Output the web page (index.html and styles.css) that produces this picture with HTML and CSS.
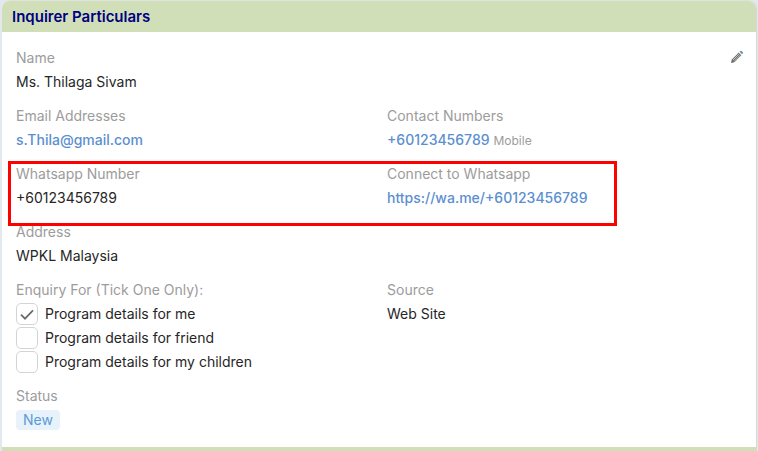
FILE: index.html
```html
<!DOCTYPE html>
<html lang="en">
<head>
    <meta charset="UTF-8">
    <meta name="viewport" content="width=device-width, initial-scale=1.0">
    <title>Inquirer Particulars</title>
    <link rel="stylesheet" href="styles.css">
</head>
<body>
    <div class="card">
        <div class="card-header">Inquirer Particulars</div>
        <div class="card-body">
            <svg class="edit-icon" width="14" height="14" viewBox="0 0 14 14">
                <path d="M1 13l.8-3.4 7-7 2.6 2.6-7 7z" fill="#6f6f68"/>
                <path d="M3 10l6.4-6.4M4.2 11.2l6.2-6.2" stroke="#fff" stroke-width=".6"/>
                <path d="M9.6 1.8l.9-.9c.3-.3.7-.3 1 0l1.4 1.4c.3.3.3.7 0 1l-.9.9z" fill="#5f8fb8"/>
            </svg>
            <div class="row">
                <div class="field">
                    <div class="label">Name</div>
                    <div class="value">Ms. Thilaga Sivam</div>
                </div>
            </div>
            <div class="row">
                <div class="field">
                    <div class="label">Email Addresses</div>
                    <div class="value"><a href="#">s.Thila@gmail.com</a></div>
                </div>
                <div class="field">
                    <div class="label">Contact Numbers</div>
                    <div class="value"><a href="#">+60123456789</a> <span class="note">Mobile</span></div>
                </div>
            </div>
            <div class="row">
                <div class="field">
                    <div class="label">Whatsapp Number</div>
                    <div class="value">+60123456789</div>
                </div>
                <div class="field">
                    <div class="label">Connect to Whatsapp</div>
                    <div class="value"><a href="#">https://wa.me/+60123456789</a></div>
                </div>
            </div>
            <div class="row">
                <div class="field">
                    <div class="label">Address</div>
                    <div class="value">WPKL Malaysia</div>
                </div>
            </div>
            <div class="row">
                <div class="field">
                    <div class="label">Enquiry For (Tick One Only):</div>
                    <div class="check-row">
                        <span class="check">
                            <svg width="14" height="11" viewBox="0 0 14 11"><path d="M1 5.6l4 4L13 1.4" fill="none" stroke="#6b6b6b" stroke-width="1.8"/></svg>
                        </span>
                        Program details for me
                    </div>
                    <div class="check-row"><span class="check"></span>Program details for friend</div>
                    <div class="check-row"><span class="check"></span>Program details for my children</div>
                </div>
                <div class="field">
                    <div class="label">Source</div>
                    <div class="value">Web Site</div>
                </div>
            </div>
            <div class="row">
                <div class="field">
                    <div class="label">Status</div>
                    <div class="value"><span class="badge">New</span></div>
                </div>
            </div>
        </div>
        <div class="card-footer"></div>
    </div>
    <div class="highlight"></div>
</body>
</html>
```

FILE: styles.css
```css
html, body {
    height: 100%;
}
body {
    margin: 0;
    font-family: Inter, "Liberation Sans", sans-serif;
    font-size: 14px;
    line-height: 24px;
    color: #262626;
    background: #e3e8ee;
    overflow: hidden;
}
.card {
    display: flex;
    flex-direction: column;
    height: 450px;
    margin: 1px 2px 0;
    background: #fff;
    border-radius: 8px 8px 0 0;
    box-shadow: 1px 0 0 #d5d8d5, 0 -1px 0 #dfe2df;
}
.card-header {
    height: 31px;
    padding-left: 10px;
    line-height: 31px;
    font-size: 15px;
    font-weight: 600;
    color: #000080;
    background: #d0dfb8;
    border-radius: 8px 8px 0 0;
}
.card-body {
    position: relative;
    flex: 1;
    padding: 14px 14px 0;
}
.card-footer {
    height: 4px;
    background: #d0dfb8;
}
.edit-icon {
    position: absolute;
    top: 18px;
    right: 12px;
}
.row {
    display: flex;
    margin-bottom: 10px;
}
.field {
    flex: none;
    width: 371px;
}
.label {
    color: #9c9c9c;
}
.value a {
    color: #5b8fd0;
    font-weight: 500;
    text-decoration: none;
}
.note {
    font-size: 12px;
    line-height: 1;
    color: #9c9c9c;
}
.check-row {
    display: flex;
    align-items: center;
    height: 24px;
}
.check {
    display: flex;
    align-items: center;
    justify-content: center;
    box-sizing: border-box;
    width: 22px;
    height: 22px;
    margin-right: 7px;
    border: 1px solid #d4d4d4;
    border-radius: 5px;
}
.badge {
    display: inline-block;
    padding: 0 7px;
    line-height: 20px;
    color: #5b9bd5;
    background: #e8f2fb;
    border-radius: 4px;
}
.highlight {
    position: absolute;
    left: 8px;
    top: 161px;
    width: 603px;
    height: 59px;
    border: 3px solid #f00;
}
```
